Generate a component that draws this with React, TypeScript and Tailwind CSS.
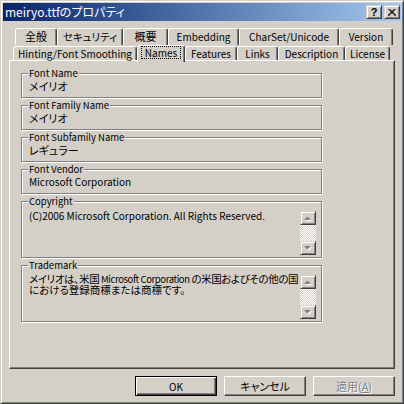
import React from "react"

const ui = "font-['Noto_Sans_CJK_JP',sans-serif] [font-feature-settings:'palt'] text-[10px] text-black"
const capBtn =
  "w-[16px] h-[14px] flex items-center justify-center bg-[#d4d0c8] border border-t-[#d4d0c8] border-l-[#d4d0c8] border-r-[#404040] border-b-[#404040] shadow-[inset_1px_1px_0_#fff,inset_-1px_-1px_0_#808080]"
const pushBtn =
  "w-[82px] h-[20px] flex items-center justify-center bg-[#d4d0c8] border border-t-white border-l-white border-r-[#404040] border-b-[#404040] shadow-[inset_-1px_-1px_0_#808080]"
const tabBase =
  "flex items-center justify-center bg-[#d4d0c8] border-t border-l border-r border-t-white border-l-white border-r-[#404040] rounded-t-[3px] shadow-[inset_-1px_0_0_#808080] whitespace-nowrap"

// Japanese runs are set a little larger than the Latin ones
function J({ children }: { children: React.ReactNode }) {
  return <span className="text-[11px]">{children}</span>
}

const row1 = [
  { label: <J>全般</J>, key: "general", w: "w-[42px]" },
  { label: <span className="text-[10.5px]">セキュリティ</span>, key: "security", w: "w-[66px]" },
  { label: <J>概要</J>, key: "summary", w: "w-[45px]" },
  { label: "Embedding", key: "embed", w: "w-[71px]" },
  { label: "CharSet/Unicode", key: "charset", w: "w-[100px]" },
  { label: "Version", key: "version", w: "w-[54px]" },
]

const row2 = [
  { label: "Hinting/Font Smoothing", w: "w-[124px]" },
  { label: "Names", w: "w-[48px]", active: true },
  { label: "Features", w: "w-[52px]" },
  { label: "Links", w: "w-[41px]" },
  { label: "Description", w: "w-[67px]" },
  { label: "License", w: "w-[45px]" },
]

const fields = [
  { title: "Font Name", value: <J>メイリオ</J> },
  { title: "Font Family Name", value: <J>メイリオ</J> },
  { title: "Font Subfamily Name", value: <J>レギュラー</J> },
  { title: "Font Vendor", value: "Microsoft Corporation" },
]

function Arrow({ up }: { up?: boolean }) {
  return (
    <svg width="8" height="5" viewBox="0 0 8 5">
      {up ? (
        <>
          <polygon points="1,5 4.5,1.5 8,5" fill="#fff" />
          <polygon points="0,4 3.5,0.5 7,4" fill="#808080" />
        </>
      ) : (
        <>
          <polygon points="1,1 8,1 4.5,4.5" fill="#fff" />
          <polygon points="0,0 7,0 3.5,3.5" fill="#808080" />
        </>
      )}
    </svg>
  )
}

function ScrollBar() {
  return (
    <div className="w-[16px] h-[44px] shrink-0 flex flex-col">
      <div className={capBtn}>
        <Arrow up />
      </div>
      <div className="flex-1 bg-[repeating-conic-gradient(#fff_0_25%,#d4d0c8_0_50%)] bg-[length:2px_2px]" />
      <div className={capBtn}>
        <Arrow />
      </div>
    </div>
  )
}

function Group({ title, tall, children }: { title: string; tall?: boolean; children: React.ReactNode }) {
  return (
    <div
      className={
        tall
          ? "relative w-[301px] h-[57px] pl-[6px] pr-[5px] pt-[9px] border border-[#808080] shadow-[inset_1px_1px_0_#fff,1px_1px_0_#fff]"
          : "relative w-[301px] h-[25px] pl-[6px] pr-[5px] pt-[6px] border border-[#808080] shadow-[inset_1px_1px_0_#fff,1px_1px_0_#fff]"
      }
    >
      <span className="absolute -top-[6px] left-[6px] px-px bg-[#d4d0c8] leading-[10px] text-[9.5px]">{title}</span>
      {children}
    </div>
  )
}

export default function App() {
  return (
    <div className={`${ui} w-[404px] h-[404px] bg-[#d4d0c8] border border-t-[#d4d0c8] border-l-[#d4d0c8] border-r-[#404040] border-b-[#404040] shadow-[inset_1px_1px_0_#fff,inset_-1px_-1px_0_#808080] p-[2px] flex flex-col`}>
      {/* title bar */}
      <div className="h-[18px] flex items-center pl-[2px] pr-[1px] bg-gradient-to-r from-[#0a246a] to-[#a6caf0]">
        <span className="flex-1 text-white text-[12px] leading-[18px]">meiryo.ttfのプロパティ</span>
        <div className="flex gap-[2px]">
          <div className={capBtn}>
            <span className="font-['Liberation_Sans',sans-serif] font-bold text-[11px] leading-none">?</span>
          </div>
          <div className={capBtn}>
            <svg width="8" height="7" viewBox="0 0 8 7">
              <path d="M0.5 0 L7.5 7 M1.5 0 L8.5 7 M7.5 0 L0.5 7 M6.5 0 L-0.5 7" stroke="#000" strokeWidth="1" fill="none" />
            </svg>
          </div>
        </div>
      </div>

      <div className="flex-1 flex flex-col px-[6px] pt-[7px] pb-[5px]">
        {/* tabs */}
        <div className="h-[17px] flex ml-[6px]">
          {row1.map((t) => (
            <div key={t.key} className={`${tabBase} ${t.w} h-[17px] pb-px`}>
              {t.label}
            </div>
          ))}
        </div>
        <div className="h-[15px] flex items-end ml-[4px] relative z-10">
          {row2.map((t) =>
            t.active ? (
              <div key={t.label} className={`${tabBase} ${t.w} h-[17px] -mb-[2px] pb-[3px]`}>
                <span className="border border-dotted border-black px-[3px] leading-[11px]">{t.label}</span>
              </div>
            ) : (
              <div key={t.label} className={`${tabBase} ${t.w} h-[14px]`}>
                {t.label}
              </div>
            )
          )}
        </div>

        {/* page */}
        <div className="h-[309px] flex flex-col gap-[7px] pt-[12px] pl-[11px] border border-t-white border-l-white border-r-[#404040] border-b-[#404040] shadow-[inset_-1px_-1px_0_#808080]">
          {fields.map((f) => (
            <Group key={f.title} title={f.title}>
              <div className="pl-px leading-[12px]">{f.value}</div>
            </Group>
          ))}
          <Group title="Copyright" tall>
            <div className="flex">
              <div className="flex-1 min-w-0 pl-px leading-[12px] -mt-px">(C)2006 Microsoft Corporation. All Rights Reserved.</div>
              <ScrollBar />
            </div>
          </Group>
          <Group title="Trademark" tall>
            <div className="flex">
              <div className="flex-1 min-w-0 pl-px -mt-[2px] flex flex-col whitespace-nowrap text-[9.5px] leading-[11px]">
                <span className="block h-[11px] tracking-[-0.4px]">
                  <span className="text-[10.5px]">メイリオは、米国</span> Microsoft Corporation{" "}
                  <span className="text-[10.5px]">の米国およびその他の国</span>
                </span>
                <span className="block h-[11px] text-[10.5px]">における登録商標または商標です。</span>
              </div>
              <ScrollBar />
            </div>
          </Group>
        </div>

        {/* buttons */}
        <div className="flex justify-end gap-[7px] mt-[7px]">
          <div className="w-[82px] h-[20px] flex items-center justify-center bg-[#d4d0c8] border border-black shadow-[inset_1px_1px_0_#fff,inset_-1px_-1px_0_#404040,inset_-2px_-2px_0_#808080]">
            OK
          </div>
          <div className={pushBtn}>
            <J>キャンセル</J>
          </div>
          <div className={`${pushBtn} text-[#808080] [text-shadow:1px_1px_0_#fff]`}>
            <J>
              適用(<span className="underline">A</span>)
            </J>
          </div>
        </div>
      </div>
    </div>
  )
}
